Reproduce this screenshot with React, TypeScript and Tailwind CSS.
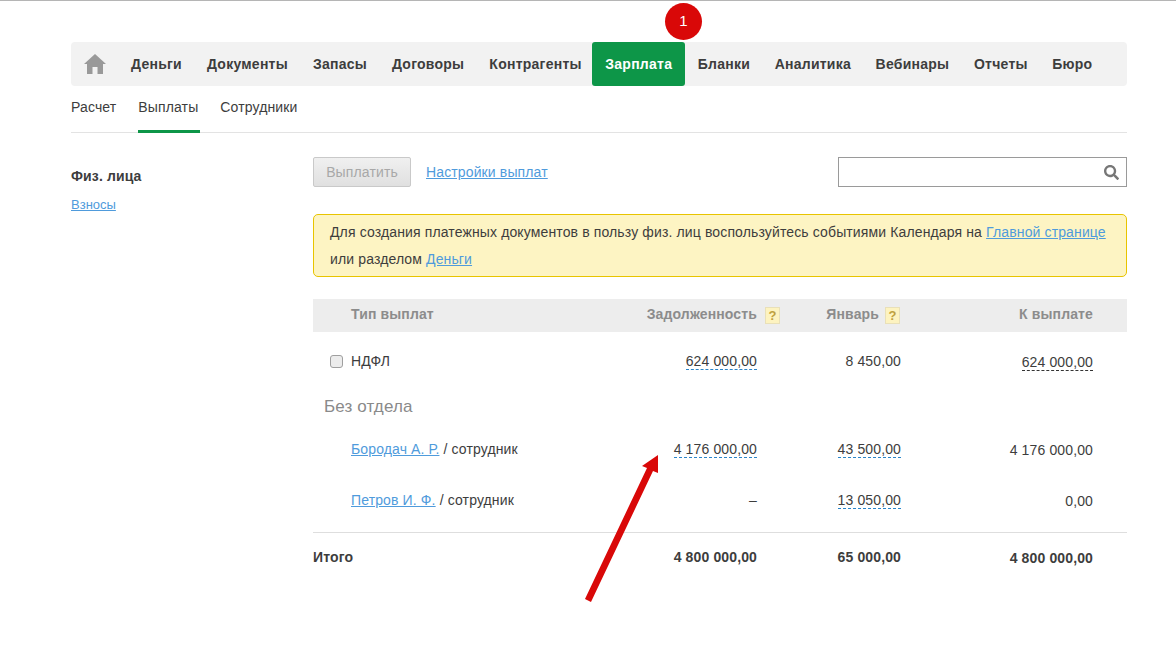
import { FaSearch } from "react-icons/fa";

const navItems = ["Деньги", "Документы", "Запасы", "Договоры", "Контрагенты"];
const navItemsRight = ["Бланки", "Аналитика", "Вебинары", "Отчеты", "Бюро"];
const rowClass = "grid grid-cols-[minmax(0,1fr)_144px_192px] pr-[34px] items-center";
const dashedBlue = "border-b border-dashed border-[#2a85c9] leading-[16px]";

function Hint() {
  return (
    <span className="inline-flex h-[17px] w-[15px] items-center justify-center border border-[#e9e0b8] bg-[#fdf3c0] text-[13px] font-bold leading-none tracking-normal text-[#bfa040]">
      ?
    </span>
  );
}

export default function App() {
  return (
    <div className="relative h-[665px] overflow-hidden border-t border-[#b5b5b5] bg-white font-['Liberation_Sans',Arial,sans-serif] text-[14px] tracking-[0.13px] text-[#3d3d3d]">
      <div className="ml-[71px] mr-[49px] pt-[41px]">
        <div className="relative">
          <div className="flex h-[44px] items-center rounded-[4px] bg-[#f2f2f2] text-[14px] font-bold tracking-[0.25px]">
            <svg className="ml-[13px] mr-[25px]" width="22" height="20" viewBox="0 0 22 20">
              <path d="M11 0 L22 10 L19 10 L19 20 L13.5 20 L13.5 13 L8.5 13 L8.5 20 L3 20 L3 10 L0 10 Z" fill="#999999" />
            </svg>
            <div className="flex gap-[25px]">
              {navItems.map((n) => (
                <span key={n}>{n}</span>
              ))}
            </div>
            <span className="ml-[10px] flex h-[44px] w-[93px] items-center justify-center rounded-[3px] bg-[#0d9648] pl-[1px] text-white">
              Зарплата
            </span>
            <div className="ml-[13px] flex gap-[24.6px]">
              {navItemsRight.map((n) => (
                <span key={n}>{n}</span>
              ))}
            </div>
          </div>
          <div className="absolute left-[594px] top-[-39px] flex h-[37px] w-[37px] items-center justify-center rounded-full bg-[#d90808] text-[15px] text-white">
            1
          </div>
        </div>

        <div className="flex h-[47px] gap-[20px] border-b border-[#e3e3e3]">
          <span className="pr-[2px] pt-[11px]">Расчет</span>
          <span className="-mb-px w-[62px] border-b-[3px] border-[#0d9648] pt-[11px]">Выплаты</span>
          <span className="pt-[11px]">Сотрудники</span>
        </div>

        <div className="flex pt-[24px]">
          <div className="w-[242px] pt-[9px]">
            <div className="font-bold">Физ. лица</div>
            <a className="mt-[8px] block text-[13px] tracking-normal text-[#4f9bdc] underline">Взносы</a>
          </div>

          <div className="w-[814px]">
            <div className="flex h-[30px] items-center">
              <button className="h-[30px] w-[98px] rounded-[2px] border border-[#c9c9c9] bg-gradient-to-b from-[#f0f0f0] to-[#e0e0e0] text-[#a8a8a8]">
                Выплатить
              </button>
              <a className="ml-[15px] text-[#4f9bdc] underline">Настройки выплат</a>
              <div className="ml-auto flex h-[30px] w-[289px] items-center justify-end border border-[#9a9a9a] pr-[7px]">
                <FaSearch className="text-[15px] text-[#777777]" />
              </div>
            </div>

            <div className="mt-[27px] h-[63px] rounded-[5px] border border-[#e8c400] bg-[#fdf4c3] pl-[16px] pt-[4px] leading-[27px]">
              Для создания платежных документов в пользу физ. лиц воспользуйтесь событиями Календаря на{" "}
              <a className="text-[#4f9bdc] underline">Главной странице</a>
              <br />
              или разделом <a className="text-[#4f9bdc] underline">Деньги</a>
            </div>

            <div className={`${rowClass} mt-[22px] h-[33px] bg-[#ededed] pb-[2px] font-bold text-[#8c8c8c]`}>
              <div className="flex items-center justify-between pl-[38px]">
                <span>Тип выплат</span>
                <span className="flex items-center">
                  Задолженность
                  <span className="-mr-[23px] ml-[8px] mt-[2px] flex"><Hint /></span>
                </span>
              </div>
              <div className="flex items-center justify-end pr-[1px]">
                Январь
                <span className="ml-[6px] mt-[2px] flex"><Hint /></span>
              </div>
              <div className="text-right">К выплате</div>
            </div>

            <div className={`${rowClass} h-[58px]`}>
              <div className="flex items-center justify-between">
                <span className="flex items-center pl-[17px]">
                  <span className="h-[13px] w-[13px] rounded-[3px] border border-[#9f9f9f] bg-[#ececec]" />
                  <span className="ml-[8px]">НДФЛ</span>
                </span>
                <span className={dashedBlue}>624 000,00</span>
              </div>
              <div className="text-right">8 450,00</div>
              <div className="flex justify-end">
                <span className="mt-[2px] border-b border-dashed border-[#333333] leading-[16px]">624 000,00</span>
              </div>
            </div>

            <div className="flex h-[29px] items-center pl-[11px] pt-[5px] text-[17px] text-[#8a8a8a]">Без отдела</div>

            <div className={`${rowClass} mt-[5px] h-[51px]`}>
              <div className="flex items-center justify-between pl-[38px]">
                <span>
                  <a className="text-[#4f9bdc] underline">Бородач А. Р.</a> / сотрудник
                </span>
                <span className={dashedBlue}>4 176 000,00</span>
              </div>
              <div className="flex justify-end">
                <span className={dashedBlue}>43 500,00</span>
              </div>
              <div className="mt-[2px] text-right">4 176 000,00</div>
            </div>

            <div className={`${rowClass} h-[58px] border-b border-[#dedede] pb-[6px]`}>
              <div className="flex items-center justify-between pl-[38px]">
                <span>
                  <a className="text-[#4f9bdc] underline">Петров И. Ф.</a> / сотрудник
                </span>
                <span>–</span>
              </div>
              <div className="flex justify-end">
                <span className={dashedBlue}>13 050,00</span>
              </div>
              <div className="mt-[2px] text-right">0,00</div>
            </div>

            <div className={`${rowClass} h-[49px] font-bold`}>
              <div className="flex items-center justify-between">
                <span>Итого</span>
                <span>4 800 000,00</span>
              </div>
              <div className="text-right">65 000,00</div>
              <div className="mt-[2px] text-right">4 800 000,00</div>
            </div>
          </div>
        </div>
      </div>

      <svg className="absolute left-[580px] top-[450px]" width="85" height="155" viewBox="0 0 85 155">
        <path d="M5 148 L67 17 L62 15 L78 4 L78 22 L73 20 L11 151 Z" fill="#d90808" />
      </svg>
    </div>
  );
}
